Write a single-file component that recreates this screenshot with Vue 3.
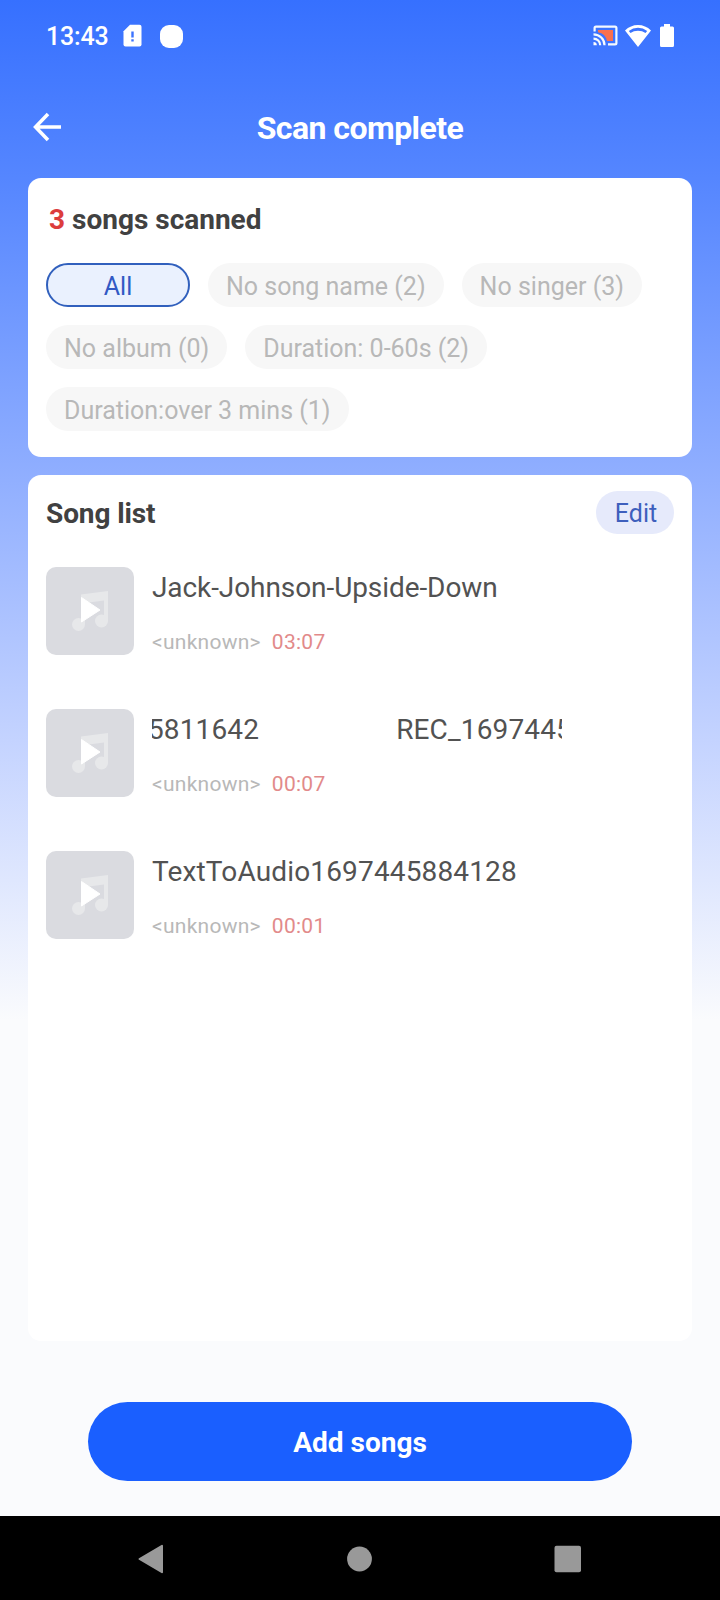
<script setup>
const filters = [
  { label: 'All', active: true },
  { label: 'No song name (2)' },
  { label: 'No singer (3)' },
  { label: 'No album (0)' },
  { label: 'Duration: 0-60s (2)' },
  { label: 'Duration:over 3 mins (1)' },
]

const songs = [
  { title: 'Jack-Johnson-Upside-Down', artist: '<unknown>', time: '03:07' },
  { title: 'REC_1697445811642', artist: '<unknown>', time: '00:07', numeric: true, scrolling: true },
  { title: 'TextToAudio1697445884128', artist: '<unknown>', time: '00:01', numeric: true },
]
</script>

<template>
  <div class="screen">
    <header class="status">
      <span class="clock">13:43</span>
      <svg class="sim" width="20" height="24" viewBox="0 0 20 24">
        <path fill="#fff" d="M7 .8H16.500Q18.500.800 18.500 2.800V20.500Q18.500 22.500 16.500 22.500H2.500Q.500 22.500.500 20.500V7.300Z" />
        <path stroke="#3b73ff" stroke-width="2.400" d="M9.500 7.500v6M9.500 15.200v2.400" />
      </svg>
      <span class="blob"></span>
      <span class="grow"></span>
      <svg width="26" height="22" viewBox="0 0 26 22">
        <path fill="#f9704e" d="M5 5H20V16H14Q12.500 8.500 5 7.200Z" />
        <g fill="none" stroke="#f4f9ff" stroke-width="2.200">
          <path d="M1.600 6.500V3Q1.600 1.600 3 1.600H22Q23.400 1.600 23.400 3V18Q23.400 19.400 22 19.400H15" />
          <path d="M.5 9.300A11 11 0 0 1 11.500 20.300M.5 13.600A6.700 6.700 0 0 1 7.200 20.300" />
        </g>
        <path fill="#fff" d="M.5 17A3.300 3.300 0 0 1 3.800 20.300H.5Z" />
      </svg>
      <svg class="wifi" width="28" height="24" viewBox="0 0 28 24">
        <path fill="#fff" fill-rule="evenodd" d="M14 1Q21.500 1 27 6.500L14 23L1 6.500Q6.500 1 14 1ZM14 3.800Q8.800 3.800 4.800 6.900L6.500 9Q9.600 6.800 14 6.800Q18.400 6.800 21.500 9L23.200 6.900Q19.200 3.800 14 3.800Z" />
      </svg>
      <svg class="battery" width="14" height="24" viewBox="0 0 14 24">
        <path fill="#fff" d="M4 0h6v2.500h2.500Q14 2.500 14 4V21.500Q14 23 12.500 23h-11Q0 23 0 21.500V4Q0 2.500 1.500 2.500H4Z" />
      </svg>
    </header>

    <div class="toolbar">
      <svg class="back" width="30" height="30" viewBox="0 0 30 30">
        <path fill="none" stroke="#fff" stroke-width="3.500" d="M16 2L3.500 15L16 28M3.500 15H29" />
      </svg>
      <h1>Scan complete</h1>
    </div>

    <section class="card summary">
      <h2><span class="count">3</span> songs scanned</h2>
      <div class="chips">
        <span v-for="f in filters" :key="f.label" class="chip" :class="{ active: f.active }">{{ f.label }}</span>
      </div>
    </section>

    <section class="card list">
      <div class="list-head">
        <h2>Song list</h2>
        <button class="edit">Edit</button>
      </div>
      <div v-for="s in songs" :key="s.title" class="song">
        <div class="cover">
          <svg width="88" height="88" viewBox="0 0 88 88">
            <g fill="#e7e8ea">
              <circle cx="32.500" cy="57.500" r="6.500" />
              <circle cx="55.500" cy="54" r="6.500" />
              <path d="M35 27.500L62 24V54H58V33.500L39 36V57H35Z" />
            </g>
            <path fill="#fff" stroke="#fff" stroke-linejoin="round" d="M35.500 30.500L54 43L35.500 55Z" />
          </svg>
        </div>
        <div class="info">
          <div class="name">
            <div class="track" :class="{ scrolling: s.scrolling, numeric: s.numeric }">
              <span>{{ s.title }}</span>
              <span v-if="s.scrolling">{{ s.title }}</span>
            </div>
          </div>
          <div class="meta">
            <span>{{ s.artist }}</span>
            <span class="time">{{ s.time }}</span>
          </div>
        </div>
      </div>
    </section>

    <button class="add">Add songs</button>

    <nav class="nav">
      <svg width="26" height="30" viewBox="0 0 26 30">
        <path fill="#999" stroke="#999" stroke-width="2" stroke-linejoin="round" d="M24 1.800V28.200L1.500 15Z" />
      </svg>
      <svg width="26" height="30" viewBox="0 0 26 30"><circle cx="13.500" cy="15" r="12.400" fill="#999" /></svg>
      <svg width="28" height="30" viewBox="0 0 28 30"><rect x="0.500" y="1.700" width="26.500" height="26.500" rx="2" fill="#999" /></svg>
    </nav>
  </div>
</template>

<style>
body { margin: 0; }
</style>

<style scoped>
.screen {
  display: flex;
  flex-direction: column;
  width: 720px;
  height: 1600px;
  overflow: hidden;
  box-sizing: border-box;
  font-family: Roboto, "Liberation Sans", sans-serif;
  background: linear-gradient(#3670ff 0, #5586ff 178px, #8eadff 465px, #c4d3ff 740px, #fafbfd 1020px);
}
h1, h2 { margin: 0; }
button { border: 0; padding: 0; font-family: inherit; }
.status {
  display: flex;
  height: 72px;
  padding: 0 46px;
  align-items: center;
}
.clock { color: #fff; font-size: 25px; font-weight: 500; width: 77px; letter-spacing: -0.2px; }
.blob { width: 23px; height: 23px; margin-left: 17px; border-radius: 9px; background: #fff; }
.grow { flex: 1; }
.wifi { margin-left: 5px; margin-top: -1px; }
.battery { margin-left: 8px; }
.toolbar {
  display: grid;
  grid-template-columns: 60px 1fr 60px;
  align-items: center;
  height: 106px;
  padding: 4px 32px 0;
  box-sizing: border-box;
}
.toolbar h1 { color: #fff; font-size: 32px; line-height: 38px; font-weight: 700; text-align: center; margin-top: 2px; letter-spacing: -0.55px; }
.card {
  margin: 0 28px;
  border-radius: 13px;
  background: #fff;
  box-sizing: border-box;
}
.card h2 { color: #414141; font-size: 28px; line-height: 34px; font-weight: 700; }
.summary { height: 279px; padding: 25px 18px 0; }
.summary h2 { padding-left: 3px; }
.count { color: #dc3d3d; }
.chips { display: flex; flex-wrap: wrap; gap: 18px; margin-top: 26px; }
.chip {
  height: 44px;
  line-height: 48px;
  padding: 0 18px;
  border-radius: 22px;
  background: #f7f7f7;
  color: #b8b8b8;
  font-size: 25px;
  box-sizing: border-box;
  white-space: nowrap;
}
.chip.active {
  width: 144px;
  padding: 0;
  line-height: 44px;
  text-align: center;
  border: 2px solid #3160bd;
  background: #eaf1fe;
  color: #3159c4;
}
.list { height: 866px; margin-top: 18px; padding: 16px 18px 0; }
.list-head { display: flex; justify-content: space-between; align-items: center; height: 43px; }
.list-head h2 { padding-top: 2px; letter-spacing: -0.1px; }
.edit {
  width: 78px;
  height: 43px;
  padding-left: 2px;
  border-radius: 22px;
  background: #e6eafb;
  color: #3e5fbd;
  font-size: 25px;
  line-height: 45px;
}
.song { display: flex; height: 88px; margin-top: 33px; }
.song + .song { margin-top: 54px; }
.cover { width: 88px; height: 88px; border-radius: 10px; background: #dadbe0; }
.cover svg { display: block; }
.info { width: 410px; margin-left: 18px; }
.name { overflow: hidden; height: 36px; margin-top: 3px; line-height: 36px; font-size: 28px; color: #525252; }
.track { display: flex; gap: 137px; width: max-content; letter-spacing: -0.08px; }
.track.numeric { letter-spacing: 0.15px; }
.track.scrolling { transform: translateX(-164px); }
.meta { display: flex; gap: 11px; margin-top: 22px; line-height: 28px; font-size: 21px; color: #b8b8b8; letter-spacing: 0.27px; }
.time { color: #e28a8a; }
.add {
  align-self: center;
  width: 544px;
  height: 79px;
  margin-top: 61px;
  border-radius: 40px;
  background: #1a5fff;
  color: #fff;
  font-size: 28px;
  font-weight: 700;
  line-height: 81px;
}
.nav {
  display: flex;
  justify-content: space-between;
  height: 84px;
  margin-top: auto;
  padding: 1px 138px 0;
  box-sizing: border-box;
  align-items: center;
  background: #000;
}
</style>
